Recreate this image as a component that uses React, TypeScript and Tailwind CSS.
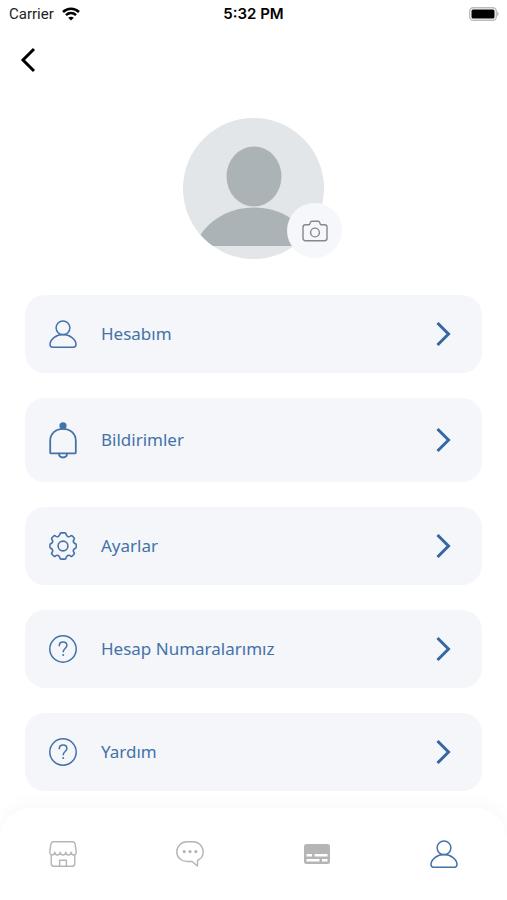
import type { ReactNode } from "react";

const line = {
  fill: "none",
  stroke: "currentColor",
  strokeLinecap: "round",
  strokeLinejoin: "round",
} as const;

function PersonIcon() {
  return (
    <svg width="28" height="28" viewBox="0 0 28 28" strokeWidth="1.5" {...line} aria-hidden="true">
      <circle cx="14" cy="7.8" r="6.9" />
      <path d="M14 14.6C7.2 14.6 1 19.4 1 24.6c0 1.7.9 2.6 2.6 2.6h20.8c1.7 0 2.6-.9 2.6-2.6 0-5.2-6.2-10-13-10Z" />
    </svg>
  );
}

function BellIcon() {
  return (
    <svg width="28" height="34" viewBox="0 0 28 34" strokeWidth="1.8" className="overflow-visible" {...line} aria-hidden="true">
      <circle cx="14" cy="2.8" r="3.6" fill="currentColor" stroke="none" />
      <path d="M1.200 29.400V18C1.200 10.600 6.600 5.800 14 5.800S26.800 10.600 26.800 18v11.400c0 .6-.4 1-1 1H2.200c-.6 0-1-.4-1-1Z" />
      <path d="M10 30.600c0 2.300 1.700 3.900 4 3.900s4-1.600 4-3.900" />
    </svg>
  );
}

function GearIcon() {
  return (
    <svg width="28" height="28" viewBox="0 0 28 28" strokeWidth="1.6" {...line} aria-hidden="true">
      <path d="M12.200.900h3.600c.9 0 1.200.5 1.300 1.300.2 1.300.6 1.800 1.700 2.300 1 .4 1.700.3 2.700-.5.700-.5 1.200-.6 1.800 0l1.700 1.700c.6.600.5 1.100 0 1.800-.8 1-.9 1.700-.5 2.700.5 1.100 1 1.500 2.300 1.700.5.100.5.700.5 2.100s0 2-.5 2.100c-1.300.2-1.800.6-2.300 1.700-.4 1-.3 1.700.5 2.700.5.700.6 1.200 0 1.800L23.300 24c-.6.600-1.100.5-1.800 0-1-.8-1.700-.9-2.700-.5-1.100.5-1.500 1-1.700 2.300-.1.800-.4 1.300-1.300 1.300h-3.600c-.9 0-1.200-.5-1.300-1.300-.2-1.300-.6-1.800-1.700-2.300-1-.4-1.700-.3-2.700.5-.7.500-1.200.6-1.800 0L3 22.300c-.6-.6-.5-1.100 0-1.800.8-1 .9-1.700.5-2.700-.5-1.100-1-1.500-2.100-1.700-.5-.1-.5-.7-.5-2.100s0-2 .5-2.100c1.100-.2 1.600-.6 2.100-1.700.4-1 .3-1.700-.5-2.700-.5-.7-.6-1.200 0-1.800L4.700 4c.6-.6 1.100-.5 1.800 0 1 .8 1.700.9 2.700.5 1.100-.5 1.500-1 1.700-2.300.1-.8.400-1.300 1.300-1.300Z" />
      <circle cx="14" cy="14" r="4.900" />
    </svg>
  );
}

function HelpIcon() {
  return (
    <svg width="28" height="28" viewBox="0 0 28 28" strokeWidth="1.5" {...line} aria-hidden="true">
      <circle cx="14" cy="14" r="13.200" />
      <path d="M10.300 10.800c0-2.200 1.600-3.700 3.800-3.700s3.800 1.400 3.800 3.500c0 2.800-3.700 3-3.700 6.200" />
      <circle cx="14.200" cy="20" r="1" fill="currentColor" stroke="none" />
    </svg>
  );
}

function CameraIcon() {
  return (
    <svg width="26" height="22" viewBox="0 0 26 22" strokeWidth="1.4" {...line} aria-hidden="true">
      <path d="M3.500 4.800h3c.8 0 1.200-.4 1.400-1.100l.4-1.300c.2-.8.700-1.200 1.500-1.200h6.400c.8 0 1.300.4 1.500 1.200l.4 1.300c.2.700.6 1.100 1.400 1.100h3c1.600 0 2.500.9 2.500 2.500v10.900c0 1.600-.9 2.500-2.500 2.500h-19C1.900 20.700 1 19.800 1 18.200V7.300c0-1.600.9-2.500 2.500-2.500Z" />
      <circle cx="13" cy="12.500" r="4.400" />
    </svg>
  );
}

function StoreIcon() {
  return (
    <svg width="28" height="28" viewBox="0 0 28 28" strokeWidth="1.400" {...line} aria-hidden="true">
      <path d="M4.300 1.800h19.400c1.400 0 2.100.7 2.400 2.100l1.100 7.800c.3 2.100-.9 3.300-2.300 3.300-1.500 0-2.500-1-2.700-2.700-.3 1.700-1.300 2.700-2.700 2.700s-2.500-1-2.700-2.700c-.3 1.700-1.400 2.700-2.800 2.700s-2.500-1-2.800-2.700c-.2 1.700-1.300 2.700-2.700 2.700s-2.400-1-2.700-2.700C5.600 14 4.600 15 3.100 15 1.700 15 .5 13.800.800 11.700L1.900 3.900c.3-1.400 1-2.100 2.400-2.100Z" />
      <path d="M2.200 15.200v8.300c0 1.900.9 2.800 2.800 2.800h18c1.900 0 2.800-.9 2.800-2.800v-8.300" />
      <path d="M10.600 26v-5.700h6.800V26" />
    </svg>
  );
}

function ChatIcon() {
  return (
    <svg width="28" height="28" viewBox="0 0 28 28" strokeWidth="1.400" {...line} aria-hidden="true">
      <path d="M11 1.800h6c5.800 0 10.200 4.300 10.200 10 0 4-2.100 7-5.600 8.700l-.2 5.500-5.300-4.500H11C5.200 21.500.8 17.500.800 11.800S5.200 1.800 11 1.800Z" />
      <g fill="currentColor" stroke="none">
        <circle cx="8.200" cy="11.600" r="1.600" />
        <circle cx="14" cy="11.600" r="1.600" />
        <circle cx="19.800" cy="11.600" r="1.600" />
      </g>
    </svg>
  );
}

function CardIcon() {
  return (
    <svg width="26" height="20" viewBox="0 0 26 20" aria-hidden="true">
      <rect width="26" height="20" rx="2.500" fill="currentColor" />
      <path d="M2.500 11.200h5.500M10.500 11.200h13M2.500 16.200h13M18 16.200h5.500" stroke="#fff" strokeWidth="2.400" />
    </svg>
  );
}

function Chevron() {
  return (
    <svg width="15" height="26" viewBox="0 0 15 26" fill="none" className="text-[#3468a0]" aria-hidden="true">
      <path d="m1.500 2 11 11-11 11" stroke="currentColor" strokeWidth="3" />
    </svg>
  );
}

function StatusBar() {
  return (
    <div className="grid h-7 grid-cols-3 items-center px-2 text-[15px] leading-5 text-[#222]">
      <div className="flex items-center gap-2 pl-px">
        <span className="font-['Roboto',sans-serif]">Carrier</span>
        <svg width="18" height="14" viewBox="0 0 18 14" fill="none" stroke="#000" strokeWidth="2.500" aria-label="Wi-Fi">
          <path d="M1 5c4.500-4.500 11.500-4.500 16 0M4 8.200c2.800-2.800 7.200-2.800 10 0" />
          <path d="M9 13.600 6.200 10.800c1.600-1.500 4-1.500 5.600 0Z" fill="#000" stroke="none" />
        </svg>
      </div>
      <span className="text-center font-semibold text-black">5:32 PM</span>
      <svg className="justify-self-end" width="30" height="14" viewBox="0 0 30 14" aria-label="Battery full">
        <rect x=".700" y=".700" width="26.600" height="12.600" rx="3.500" fill="#fff" stroke="#bbb" strokeWidth="1.400" />
        <rect x="2.500" y="2.500" width="23" height="9" rx="1.500" />
        <path d="M28.300 4.800c1.700.6 1.700 3.800 0 4.400Z" fill="#aaa" />
      </svg>
    </div>
  );
}

const menu: { label: string; icon: ReactNode }[] = [
  { label: "Hesabım", icon: <PersonIcon /> },
  { label: "Bildirimler", icon: <BellIcon /> },
  { label: "Ayarlar", icon: <GearIcon /> },
  { label: "Hesap Numaralarımız", icon: <HelpIcon /> },
  { label: "Yardım", icon: <HelpIcon /> },
];

const tabs: { label: string; icon: ReactNode; active?: boolean }[] = [
  { label: "Mağaza", icon: <StoreIcon /> },
  { label: "Mesajlar", icon: <ChatIcon /> },
  { label: "Kartlar", icon: <CardIcon /> },
  { label: "Profil", icon: <PersonIcon />, active: true },
];

export default function App() {
  return (
    <div className="flex min-h-screen flex-col bg-white font-['Inter',sans-serif]">
      <StatusBar />
      <header className="flex h-16 items-center px-4">
        <button type="button" aria-label="Geri" className="flex h-8 w-6 items-center justify-center">
          <svg width="16" height="26" viewBox="0 0 16 26" fill="none" aria-hidden="true">
            <path d="M14 2 3 13l11 11" stroke="#000" strokeWidth="3" />
          </svg>
        </button>
      </header>
      <main className="flex flex-col px-[25px] pt-[26px] pb-[17px]">
        <div className="relative mx-auto size-[141px]">
          <svg viewBox="0 0 141 141" className="size-full" role="img" aria-label="Profil fotoğrafı">
            <defs>
              <clipPath id="avatar">
                <circle cx="70.500" cy="70.500" r="70.500" />
              </clipPath>
            </defs>
            <g clipPath="url(#avatar)">
              <rect width="141" height="141" fill="#e2e6e8" />
              <ellipse cx="71" cy="58.500" rx="27.500" ry="30" fill="#abb3b6" />
              <path d="M12 128c8-23 32-38.500 59-38.500s51 15.500 59 38.500Z" fill="#abb3b6" />
            </g>
          </svg>
          <button
            type="button"
            aria-label="Fotoğrafı değiştir"
            className="absolute -right-[18px] bottom-px flex size-[55px] items-center justify-center rounded-full bg-[#f6f7fa] text-[#85888c]"
          >
            <CameraIcon />
          </button>
        </div>
        <ul className="mt-9 flex flex-col gap-[25px]">
          {menu.map(({ label, icon }) => (
            <li key={label}>
              <button
                type="button"
                className="flex w-full items-center gap-6 rounded-[20px] bg-[#f4f6fa] py-[25px] pr-[31px] pl-6 text-left text-[#4472a8]"
              >
                {icon}
                <span className="grow font-['Noto_Sans',sans-serif] text-[17px] leading-6">{label}</span>
                <Chevron />
              </button>
            </li>
          ))}
        </ul>
      </main>
      <nav className="mt-auto grid h-[92px] grid-cols-4 rounded-t-[32px] bg-white shadow-[0_-4px_20px_rgba(0,0,0,0.03)]">
        {tabs.map(({ label, icon, active }) => (
          <button
            key={label}
            type="button"
            aria-label={label}
            aria-current={active ? "page" : undefined}
            className={`flex items-center justify-center ${active ? "text-[#4472a8]" : "text-[#b5b5b5]"}`}
          >
            {icon}
          </button>
        ))}
      </nav>
    </div>
  );
}
